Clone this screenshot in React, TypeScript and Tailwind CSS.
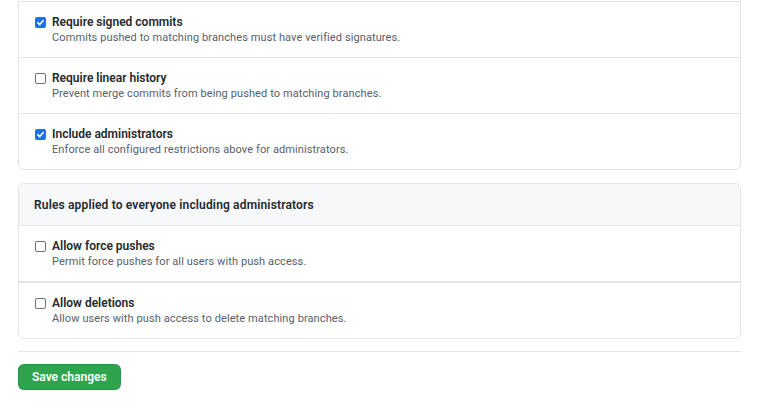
const rules = [
  { title: 'Require signed commits', desc: 'Commits pushed to matching branches must have verified signatures.', checked: true },
  { title: 'Require linear history', desc: 'Prevent merge commits from being pushed to matching branches.', checked: false },
  { title: 'Include administrators', desc: 'Enforce all configured restrictions above for administrators.', checked: true },
];

const everyone = [
  { title: 'Allow force pushes', desc: 'Permit force pushes for all users with push access.', checked: false },
  { title: 'Allow deletions', desc: 'Allow users with push access to delete matching branches.', checked: false },
];

function Checkbox({ checked }: { checked: boolean }) {
  if (checked) {
    return (
      <span className="mt-[2px] flex h-[11px] w-[11px] shrink-0 items-center justify-center rounded-[2px] bg-[#1f6feb]">
        <svg viewBox="0 0 10 10" className="h-[9px] w-[9px]">
          <path d="M2 5.2 L4.1 7.3 L8 2.8" fill="none" stroke="white" strokeWidth="1.8" strokeLinecap="round" strokeLinejoin="round" />
        </svg>
      </span>
    );
  }
  return <span className="mt-[2px] h-[11px] w-[11px] shrink-0 rounded-[2px] border border-[#6a737d] bg-white" />;
}

function Rule({ title, desc, checked, last, thick }: { title: string; desc: string; checked: boolean; last?: boolean; thick?: boolean }) {
  return (
    <div className={`flex gap-[6px] pl-[16px] pt-[13px] pb-[12px] ${last ? '' : thick ? 'border-b-2 border-[#e1e4e8]' : 'border-b border-[#e1e4e8]'}`}>
      <Checkbox checked={checked} />
      <div>
        <div className="text-[12px] font-semibold leading-[15px] text-[#24292e]">{title}</div>
        <div className="text-[11px] leading-[15px] tracking-[0.1px] text-[#586069]">{desc}</div>
      </div>
    </div>
  );
}

export default function App() {
  return (
    <div className="min-h-screen bg-white px-[18px] pt-px" style={{ fontFamily: 'Roboto, "Liberation Sans", Arial, sans-serif' }}>
      <div className="w-[723px]">
        <div className="rounded-b-[6px] border border-[#e1e4e8]">
          {rules.map((r, i) => (
            <Rule key={r.title} {...r} last={i === rules.length - 1} />
          ))}
        </div>

        <div className="mt-[13px] overflow-hidden rounded-[6px] border border-[#e1e4e8]">
          <div className="flex h-[42px] items-center border-b border-[#e1e4e8] bg-[#f6f8fa] pl-[15px] text-[12px] font-semibold tracking-[0.16px] text-[#24292e]">
            Rules applied to everyone including administrators
          </div>
          {everyone.map((r, i) => (
            <Rule key={r.title} {...r} thick={i === 0} last={i === everyone.length - 1} />
          ))}
        </div>

        <div className="mt-[12px] border-t border-[#e1e4e8]" />

        <button className="mt-[12px] h-[26px] rounded-[6px] border border-[rgba(27,31,35,0.15)] bg-[#2ea44f] px-[13px] text-[12px] font-semibold text-white">
          Save changes
        </button>
      </div>
    </div>
  );
}
